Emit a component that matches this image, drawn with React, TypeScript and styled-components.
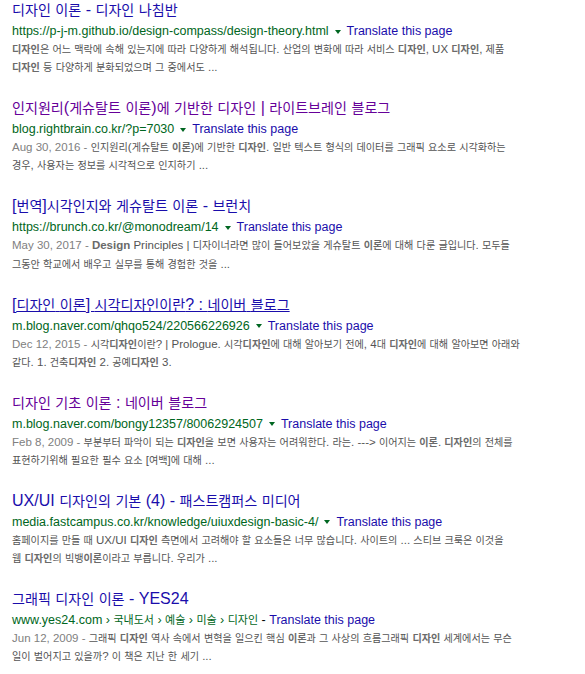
import React from 'react'
import styled, { createGlobalStyle } from 'styled-components'

const GlobalStyle = createGlobalStyle`
  body {
    margin: 0;
    background: #fff;
    font-family: "Liberation Sans", Arial, "Noto Sans CJK KR", sans-serif;
  }
`

const ResultList = styled.div`
  display: flex;
  flex-direction: column;
  margin-top: -2px;
  padding-left: 12px;
`

const Result = styled.div`
  display: flex;
  flex-direction: column;
  margin-bottom: 19.8px;
`

const Title = styled.a<{ $visited?: boolean; $hover?: boolean }>`
  display: block;
  height: 24px;
  font-size: 16px;
  line-height: 24px;
  color: ${p => (p.$visited ? '#660099' : '#1a0dab')};
  text-decoration: ${p => (p.$hover ? 'underline' : 'none')};
  white-space: nowrap;
  cursor: pointer;
`

const UrlRow = styled.div`
  display: flex;
  align-items: center;
  height: 18px;
  font-size: 12.5px;
  white-space: nowrap;
`

const Cite = styled.cite`
  font-style: normal;
  color: #006621;
`

const Arrow = styled.span`
  width: 0;
  height: 0;
  margin: 1px 6px 0 6px;
  border-left: 3px solid transparent;
  border-right: 3px solid transparent;
  border-top: 4px solid #006621;
`

const Translate = styled.a`
  color: #1a0dab;
  cursor: pointer;
`

const Snippet = styled.div`
  font-size: 11.5px;
  color: #545454;
`

const SnippetLine = styled.div`
  height: 18.2px;
  line-height: 18.2px;
  white-space: nowrap;
`

const DateText = styled.span`
  color: #808080;
`

const Em = styled.b`
  color: #6a6a6a;
  font-weight: bold;
`

// Hangul runs get a slightly smaller size so they sit at the reference width
const Ko = styled.span`
  font-family: "Noto Sans CJK KR", sans-serif;
  font-size: 0.88em;
  line-height: 1;
`

const hangul = /([\u3131-\u318E\uAC00-\uD7A3]+)/

const ko = (text: string) =>
  text.split(hangul).map((part, i) =>
    hangul.test(part) ? <Ko key={i}>{part}</Ko> : <React.Fragment key={i}>{part}</React.Fragment>
  )

// "**word**" marks the bold (matched) terms of a snippet line
const rich = (line: string) =>
  line.split('**').map((part, i) =>
    i % 2 === 1 ? <Em key={i}>{ko(part)}</Em> : <React.Fragment key={i}>{ko(part)}</React.Fragment>
  )

interface IResult {
  title: string
  url: string
  visited?: boolean
  hover?: boolean
  noArrow?: boolean
  date?: string
  lines: string[]
}

const results: IResult[] = [
  {
    title: '디자인 이론 - 디자인 나침반',
    url: 'https://p-j-m.github.io/design-compass/design-theory.html',
    lines: [
      '**디자인**은 어느 맥락에 속해 있는지에 따라 다양하게 해석됩니다. 산업의 변화에 따라 서비스 **디자인**, UX **디자인**, 제품',
      '**디자인** 등 다양하게 분화되었으며 그 중에서도 ...'
    ]
  },
  {
    title: '인지원리(게슈탈트 이론)에 기반한 디자인 | 라이트브레인 블로그',
    url: 'blog.rightbrain.co.kr/?p=7030',
    visited: true,
    date: 'Aug 30, 2016 - ',
    lines: [
      '인지원리(게슈탈트 **이론**)에 기반한 **디자인**. 일반 텍스트 형식의 데이터를 그래픽 요소로 시각화하는',
      '경우, 사용자는 정보를 시각적으로 인지하기 ...'
    ]
  },
  {
    title: '[번역]시각인지와 게슈탈트 이론 - 브런치',
    url: 'https://brunch.co.kr/@monodream/14',
    date: 'May 30, 2017 - ',
    lines: [
      '**Design** Principles | 디자이너라면 많이 들어보았을 게슈탈트 **이론**에 대해 다룬 글입니다. 모두들',
      '그동안 학교에서 배우고 실무를 통해 경험한 것을 ...'
    ]
  },
  {
    title: '[디자인 이론] 시각디자인이란? : 네이버 블로그',
    url: 'm.blog.naver.com/qhqo524/220566226926',
    hover: true,
    date: 'Dec 12, 2015 - ',
    lines: [
      '시각**디자인**이란? | Prologue. 시각**디자인**에 대해 알아보기 전에, 4대 **디자인**에 대해 알아보면 아래와',
      '같다. 1. 건축**디자인** 2. 공예**디자인** 3.'
    ]
  },
  {
    title: '디자인 기초 이론 : 네이버 블로그',
    url: 'm.blog.naver.com/bongy12357/80062924507',
    visited: true,
    date: 'Feb 8, 2009 - ',
    lines: [
      '부분부터 파악이 되는 **디자인**을 보면 사용자는 어려워한다. 라는. ---> 이어지는 **이론**. **디자인**의 전체를',
      '표현하기위해 필요한 필수 요소 [여백]에 대해 ...'
    ]
  },
  {
    title: 'UX/UI 디자인의 기본 (4) - 패스트캠퍼스 미디어',
    url: 'media.fastcampus.co.kr/knowledge/uiuxdesign-basic-4/',
    lines: [
      '홈페이지를 만들 때 UX/UI **디자인** 측면에서 고려해야 할 요소들은 너무 많습니다. 사이트의 ... 스티브 크룩은 이것을',
      '웹 **디자인**의 빅뱅**이론**이라고 부릅니다. 우리가 ...'
    ]
  },
  {
    title: '그래픽 디자인 이론 - YES24',
    url: 'www.yes24.com › 국내도서 › 예술 › 미술 › 디자인',
    noArrow: true,
    date: 'Jun 12, 2009 - ',
    lines: [
      '그래픽 **디자인** 역사 속에서 변혁을 일으킨 핵심 **이론**과 그 사상의 흐름그래픽 **디자인** 세계에서는 무슨',
      '일이 벌어지고 있을까? 이 책은 지난 한 세기 ...'
    ]
  }
]

const SearchResult = ({ result }: { result: IResult }) => (
  <Result>
    <Title $visited={result.visited} $hover={result.hover}>{ko(result.title)}</Title>
    <UrlRow>
      <Cite>{ko(result.url)}</Cite>
      {result.noArrow ? <span>&nbsp;-&nbsp;</span> : <Arrow />}
      <Translate>Translate this page</Translate>
    </UrlRow>
    <Snippet>
      {result.lines.map((line, i) => (
        <SnippetLine key={i}>
          {i === 0 && result.date && <DateText>{result.date}</DateText>}
          {rich(line)}
        </SnippetLine>
      ))}
    </Snippet>
  </Result>
)

const App = () => (
  <>
    <GlobalStyle />
    <ResultList>
      {results.map((r, i) => (
        <SearchResult key={i} result={r} />
      ))}
    </ResultList>
  </>
)

export default App
